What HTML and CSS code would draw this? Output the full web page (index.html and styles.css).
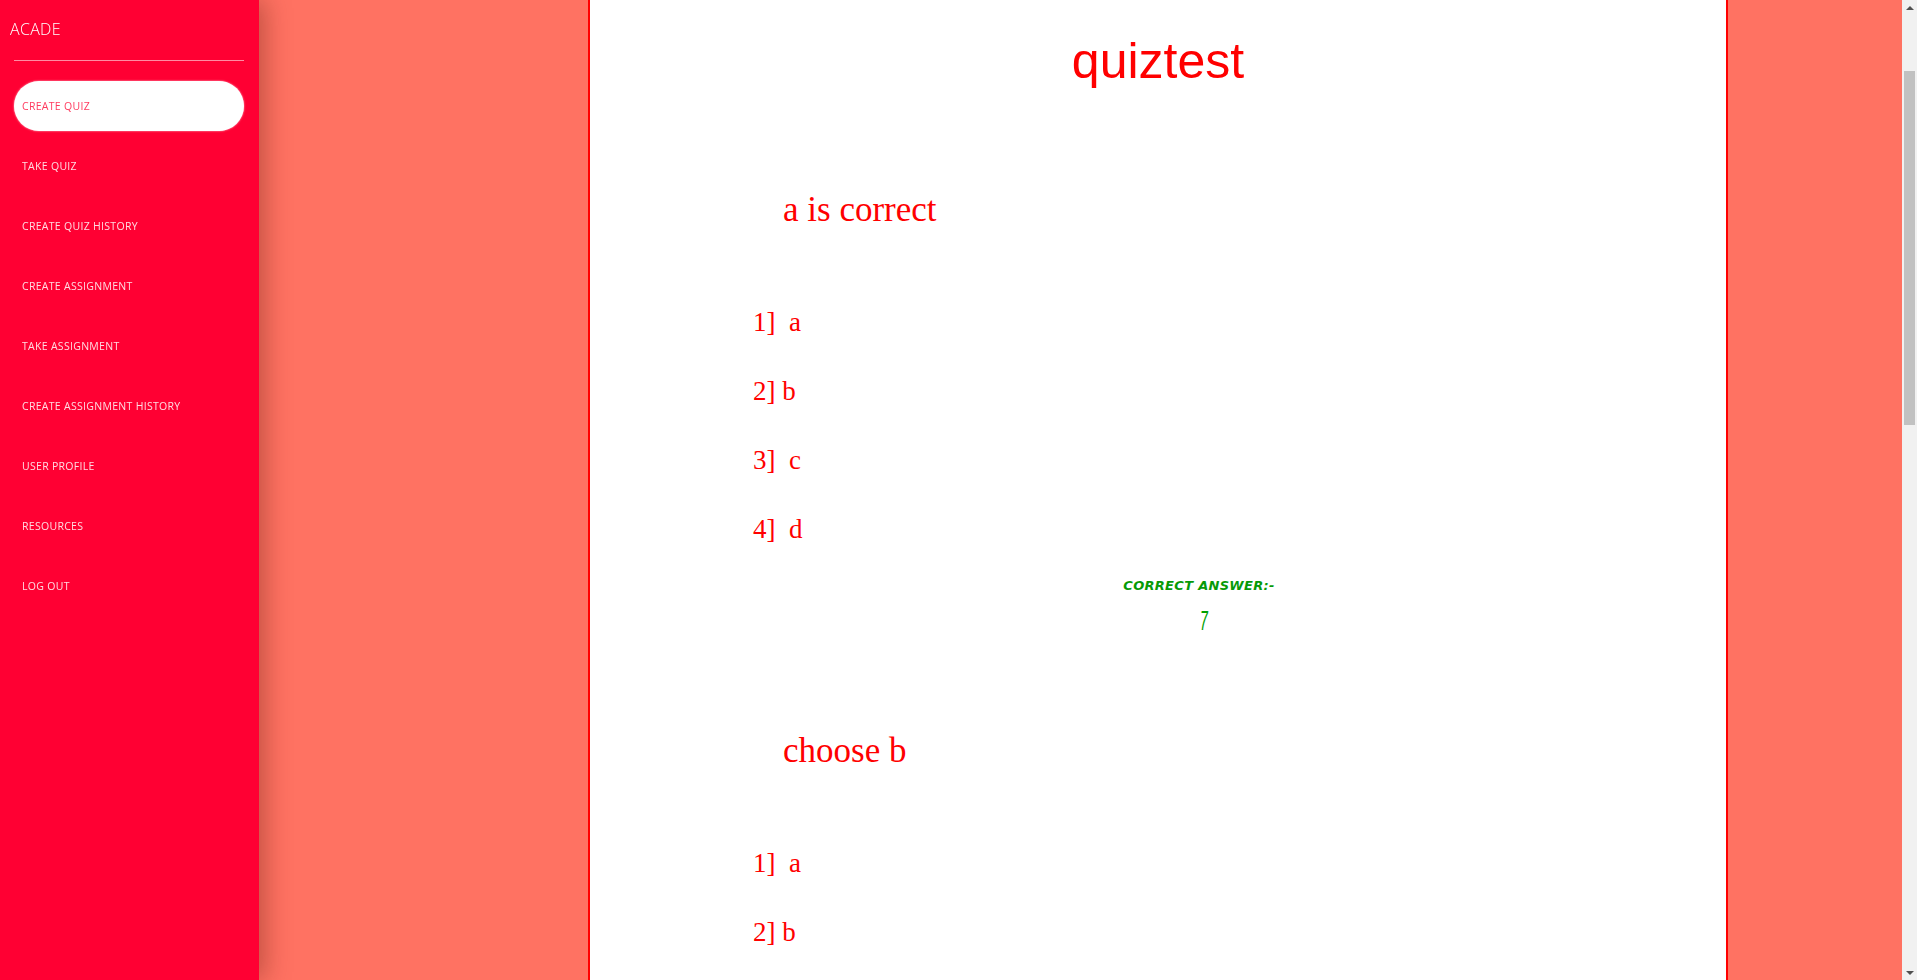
FILE: index.html
```html
<!DOCTYPE html>
<html lang="en">
<head>
<meta charset="utf-8">
<title>quiztest</title>
<link rel="stylesheet" href="styles.css">
</head>
<body>
<aside class="sidebar">
  <div class="brand">ACADE</div>
  <hr class="divider">
  <nav class="nav">
    <a class="nav-item active" href="#">CREATE QUIZ</a>
    <a class="nav-item" href="#">TAKE QUIZ</a>
    <a class="nav-item" href="#">CREATE QUIZ HISTORY</a>
    <a class="nav-item" href="#">CREATE ASSIGNMENT</a>
    <a class="nav-item" href="#">TAKE ASSIGNMENT</a>
    <a class="nav-item" href="#">CREATE ASSIGNMENT HISTORY</a>
    <a class="nav-item" href="#">USER PROFILE</a>
    <a class="nav-item" href="#">RESOURCES</a>
    <a class="nav-item" href="#">LOG OUT</a>
  </nav>
</aside>
<main class="page">
  <section class="panel">
    <h1 class="quiz-title">quiztest</h1>

    <div class="question">
      <h2 class="q-text">a is correct</h2>
      <p class="option">1]&nbsp; a</p>
      <p class="option">2] b</p>
      <p class="option">3]&nbsp; c</p>
      <p class="option">4]&nbsp; d</p>
      <div class="answer">
        <div class="answer-label">CORRECT ANSWER:-</div>
        <div class="answer-value"><span class="answer-glyph">7</span></div>
      </div>
    </div>

    <div class="question">
      <h2 class="q-text">choose b</h2>
      <p class="option">1]&nbsp; a</p>
      <p class="option">2] b</p>
      <p class="option">3]&nbsp; c</p>
      <p class="option">4]&nbsp; d</p>
      <div class="answer">
        <div class="answer-label">CORRECT ANSWER:-</div>
        <div class="answer-value"><span class="answer-glyph">7</span></div>
      </div>
    </div>

    <div class="question">
      <h2 class="q-text">choose c</h2>
      <p class="option">1]&nbsp; a</p>
      <p class="option">2] b</p>
      <p class="option">3]&nbsp; c</p>
      <p class="option">4]&nbsp; d</p>
      <div class="answer">
        <div class="answer-label">CORRECT ANSWER:-</div>
        <div class="answer-value"><span class="answer-glyph">7</span></div>
      </div>
    </div>

    <div class="question">
      <h2 class="q-text">choose d</h2>
      <p class="option">1]&nbsp; a</p>
      <p class="option">2] b</p>
      <p class="option">3]&nbsp; c</p>
      <p class="option">4]&nbsp; d</p>
      <div class="answer">
        <div class="answer-label">CORRECT ANSWER:-</div>
        <div class="answer-value"><span class="answer-glyph">7</span></div>
      </div>
    </div>
  </section>
</main>
<div class="scrollbar" aria-hidden="true">
  <div class="sb-button"><span class="sb-arrow up"></span></div>
  <div class="sb-track"><div class="sb-thumb"></div></div>
  <div class="sb-button"><span class="sb-arrow down"></span></div>
</div>
<script src="script.js"></script>
</body>
</html>
```

FILE: styles.css
```css
html, body {
  margin: 0;
  padding: 0;
}

body {
  background: #ff7262;
  font-family: "Liberation Serif", serif;
}

/* Sidebar */
.sidebar {
  position: fixed;
  top: 0;
  left: 0;
  width: 259px;
  height: 100vh;
  background: #ff0033;
  box-shadow: 6px 0 24px rgba(80, 20, 10, 0.35);
  font-family: "Open Sans", "Liberation Sans", sans-serif;
  z-index: 10;
}

.brand {
  padding: 19px 0 0 10px;
  height: 41px;
  box-sizing: border-box;
  font-size: 16px;
  font-weight: 300;
  line-height: 20px;
  letter-spacing: 0.3px;
  color: #ffffff;
}

.divider {
  margin: 19px 15px 0 14px;
  border: 0;
  height: 1px;
  background: rgba(255, 255, 255, 0.55);
}

.nav {
  display: flex;
  flex-direction: column;
  gap: 10px;
  padding: 20px 15px 0 14px;
}

.nav-item {
  display: flex;
  align-items: center;
  height: 50px;
  padding-left: 8px;
  border-radius: 25px;
  font-size: 10.5px;
  letter-spacing: 0.3px;
  color: rgba(255, 255, 255, 0.86);
  text-decoration: none;
}

.nav-item.active {
  background: #ffffff;
  color: #ff3a5e;
  box-shadow: 0 0 2px rgba(255, 255, 255, 0.8);
}

/* Main */
.page {
  padding-left: 588px;
}

.panel {
  width: 1136px;
  background: #ffffff;
  border-left: 2px solid #ff0000;
  border-right: 2px solid #ff0000;
  padding: 188px 0 121px;
  color: #ff0000;
}

.quiz-title {
  margin: 0 0 101px;
  font-family: "Liberation Sans", Arial, sans-serif;
  font-size: 50px;
  font-weight: 400;
  line-height: 56px;
  text-align: center;
}

.question {
  display: flex;
  flex-direction: column;
  margin-bottom: 96px;
}

.question:last-child {
  margin-bottom: 0;
}

.q-text {
  margin: 0 0 76px 193px;
  font-size: 35px;
  font-weight: 400;
  line-height: 40px;
}

.option {
  margin: 0 0 37px 163px;
  font-size: 27px;
  line-height: 32px;
}

.option:last-of-type {
  margin-bottom: 0;
}

.answer {
  display: flex;
  flex-direction: column;
  align-items: center;
  width: 892px;
  margin: 33px 0 0 163px;
  color: #00a000;
}

.answer-label {
  font-family: "DejaVu Sans", "Liberation Sans", sans-serif;
  font-size: 13px;
  font-weight: 700;
  font-style: italic;
  line-height: 16px;
  letter-spacing: 0.3px;
  color: #079a07;
}

.answer-value {
  margin-top: 13px;
  padding-left: 10px;
  font-family: "Liberation Sans", Arial, sans-serif;
  font-size: 28px;
  line-height: 28px;
  font-style: italic;
}

.answer-glyph {
  display: inline-block;
  transform: scaleX(0.5);
}

/* Window scrollbar (drawn over the page edge) */
.scrollbar {
  position: fixed;
  top: 0;
  right: 0;
  width: 15px;
  height: 100vh;
  display: flex;
  flex-direction: column;
  background: #f1f1f1;
  z-index: 20;
}

.sb-button {
  height: 15px;
  display: flex;
  align-items: center;
  justify-content: center;
}

.sb-arrow {
  width: 0;
  height: 0;
  border-left: 4px solid transparent;
  border-right: 4px solid transparent;
}

.sb-arrow.up {
  border-bottom: 4px solid #505050;
}

.sb-arrow.down {
  border-top: 4px solid #505050;
}

.sb-track {
  flex: 1;
  padding: 56px 2px 0;
}

.sb-thumb {
  height: 354px;
  background: #c1c1c1;
}
```

FILE: script.js
```js
window.scrollTo(0, 155);
window.addEventListener('load', function () {
  window.scrollTo(0, 155);
});
```
